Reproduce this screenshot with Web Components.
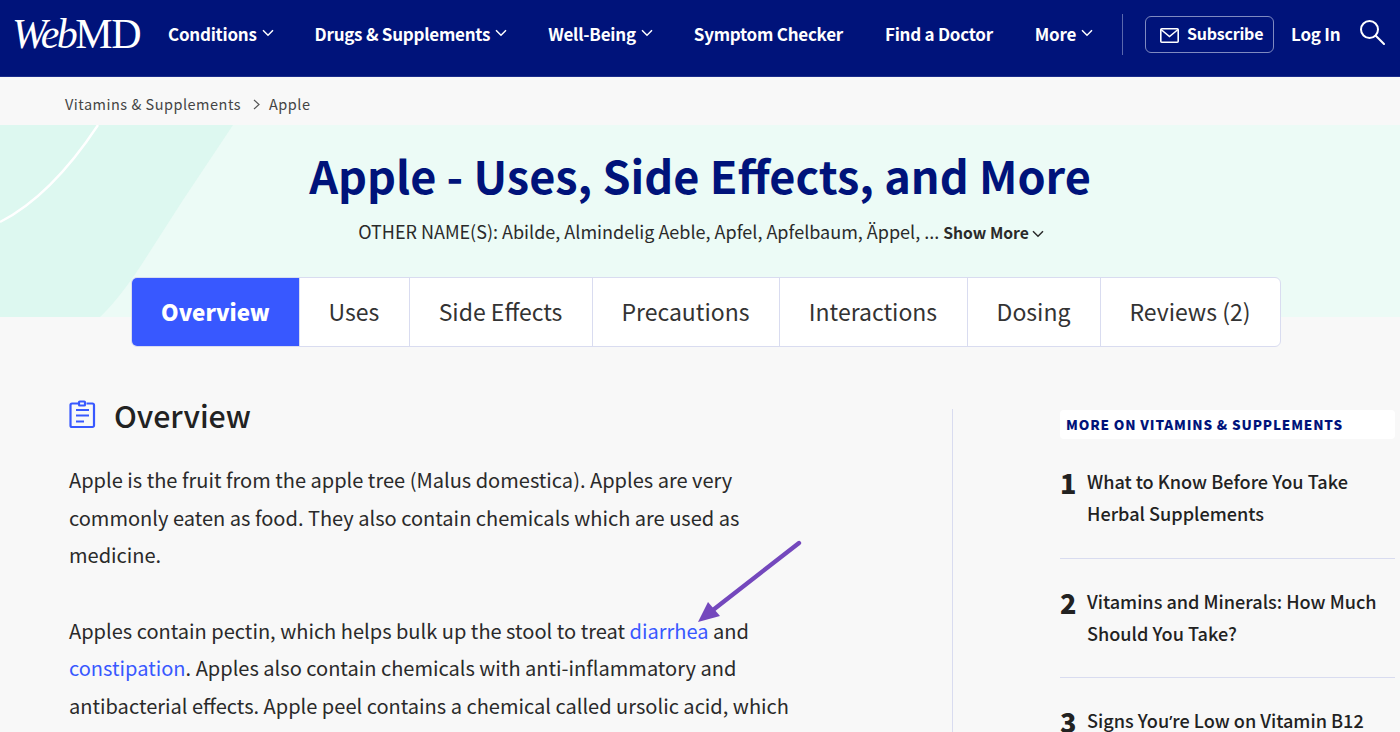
<!DOCTYPE html>
<html lang="en"><head><meta charset="utf-8"><title>Apple - Uses, Side Effects, and More</title>
<style>
html,body{margin:0;padding:0;height:732px;overflow:hidden;background:#f8f8f8;font-family:"Noto Sans CJK SC","Source Sans Pro","Noto Sans",sans-serif;color:#222}
</style></head><body>
<site-header></site-header>
<bread-crumbs></bread-crumbs>
<page-hero></page-hero>
<page-main>
  <article-body></article-body>
  <side-list slot="side"></side-list>
</page-main>
<script>
const def=(name,html)=>customElements.define(name,class extends HTMLElement{connectedCallback(){if(!this.shadowRoot){this.attachShadow({mode:'open'}).innerHTML=html}}});
const chev='<svg width="12" height="8" viewBox="0 0 12 8" fill="none" stroke="currentColor" stroke-width="1.5"><path d="M1 1.2 6 6.2 11 1.2"/></svg>';
def('site-header',`<style>
:host{display:flex;align-items:center;height:77px;background:#00137a;color:#fff;font-weight:600;font-size:17px;letter-spacing:-.25px;box-sizing:border-box;padding:0 0 10px 12px;border-bottom:1px solid #1a2c8a}
.logo{font-family:"Liberation Serif",serif;font-weight:400;font-size:42px;letter-spacing:-1.5px;width:128px;flex:none;line-height:1;white-space:nowrap;margin-top:2px}
.logo i{letter-spacing:-2.5px}
a{display:flex;align-items:center;gap:5px;white-space:nowrap}
.c{margin-left:28px}.n{margin-left:41px}.m{margin-left:42px}
.sep{width:1px;height:41px;background:#5a68ad;margin:2px 0 0 29px}
.sub{margin:2px 0 0 22px;width:129px;height:37px;box-sizing:border-box;border:1px solid #7f8ac0;border-radius:6px;justify-content:center;gap:8px;flex:none;font-size:16px;letter-spacing:-.2px;padding:0 0 2px 4px}
.sub svg{margin-top:5px}
.log{margin-left:17px}.s{margin-left:19px;margin-top:-2px;display:flex}
</style>
<div class="logo"><i>Web</i>MD</div>
<a class="c">Conditions ${chev}</a>
<a class="n">Drugs &amp; Supplements ${chev}</a>
<a class="n">Well-Being ${chev}</a>
<a class="n">Symptom Checker</a>
<a class="m">Find a Doctor</a>
<a class="m">More ${chev}</a>
<span class="sep"></span>
<a class="sub"><svg width="19" height="15" viewBox="0 0 19 15" fill="none" stroke="#fff" stroke-width="1.6"><rect x=".8" y=".8" width="17.4" height="13.4" rx="1"/><path d="M1 1.5 9.5 8.5 18 1.5"/></svg>Subscribe</a>
<a class="log">Log In</a>
<span class="s"><svg width="26" height="26" viewBox="0 0 26 26" fill="none" stroke="#fff" stroke-width="2"><circle cx="10.5" cy="10.5" r="8.5"/><path d="M16.8 16.8 25 25" stroke-linecap="round"/></svg></span>`);
def('bread-crumbs',`<style>
:host{display:flex;align-items:center;height:48px;padding:5px 0 0 65px;font-size:14.5px;letter-spacing:.5px;color:#444;background:#f8f8f8;box-sizing:border-box}
svg{margin:2px 9px 0 12px}
</style>Vitamins &amp; Supplements<svg width="7" height="11" viewBox="0 0 7 11" fill="none" stroke="#555" stroke-width="1.2"><path d="M1 1l5 4.5L1 10"/></svg>Apple`);
def('page-hero',`<style>
:host{display:block;position:relative;height:222px;text-align:center}
.bg{position:absolute;left:0;top:0;width:100%;height:192px}
.in{position:relative;display:flex;flex-direction:column;align-items:center}
h1{margin:18px 0 0;height:64px;line-height:64px;font-size:45.05px;font-weight:700;color:#00137a}
p{margin:9px 0 0 2px;height:30px;line-height:30px;font-size:18px;color:#2a2a2a;display:flex;align-items:center;gap:4px}
b{font-weight:600;font-size:15.7px;display:inline-flex;align-items:center;gap:3px;margin-top:3px}
b svg{margin-top:2px}
</style>
<svg class="bg" viewBox="0 0 1400 192" preserveAspectRatio="none"><rect width="1400" height="192" fill="#ecfbf6"/><path d="M0 0H233L183 75 140 142Q118 175 100 192H0Z" fill="#ddf8f0"/><path d="M98 0Q51 71 0 97" fill="none" stroke="#fff" stroke-width="2.4"/></svg>
<div class="in"><h1>Apple - Uses, Side Effects, and More</h1>
<p>OTHER NAME(S): Abilde, Almindelig Aeble, Apfel, Apfelbaum, Äppel, ... <b>Show More ${chev}</b></p>
<tab-bar></tab-bar></div>`);
def('tab-bar',`<style>
:host{display:flex;margin:31px 0 0 11px;height:70px;width:1150px;box-sizing:border-box;background:#fff;border:1px solid #d9dcf0;border-radius:6px;font-size:23px;color:#333;overflow:hidden}
span{display:flex;align-items:center;justify-content:center;border-left:1px solid #d9dcf0;box-sizing:border-box;padding-bottom:2px}
.a{background:#3858ff;color:#fff;font-weight:900;font-size:22.4px;border-left:0;margin:-1px 0 -1px -1px;padding-left:2px}
</style>
<span class="a" style="width:168px">Overview</span><span style="width:110px">Uses</span><span style="width:183px">Side Effects</span><span style="width:187px">Precautions</span><span style="width:188px">Interactions</span><span style="width:133px">Dosing</span><span style="flex:1">Reviews (2)</span>`);
def('page-main',`<style>
:host{display:flex;padding-left:69px;margin-top:62px}
.l{width:884px;height:323px;border-right:1px solid #d9dcf0;box-sizing:border-box}
.r{margin-left:107px;width:335px;padding-top:1px}
</style><div class="l"><slot></slot></div><div class="r"><slot name="side"></slot></div>`);
def('article-body',`<style>
:host{display:block;font-size:20.05px;line-height:37.5px;color:#2a2a2a;position:relative;width:760px;margin-top:-10px}
h2{margin:0;display:flex;align-items:center;gap:18px;height:34px;font-size:30.3px;font-weight:500;color:#222}
h2 svg{flex:none;margin:-4px 0 0 0}
p{margin:0}
.p1{margin-top:28px}.p2{margin-top:38px}
a{color:#3858ff}
.arrow{position:absolute;left:628px;top:142px}
</style>
<h2><svg width="27" height="29" viewBox="0 0 27 29" fill="none" stroke="#3858ff" stroke-width="2.2"><path d="M9 3.5H3a1.5 1.5 0 0 0-1.5 1.5v20.5A1.5 1.5 0 0 0 3 27h20.5a1.5 1.5 0 0 0 1.5-1.5V5a1.5 1.5 0 0 0-1.5-1.5h-6"/><rect x="10" y="1.5" width="6" height="4" rx=".8"/><path d="M7 10h13M7 15.500h13M7 21.500h8"/></svg>Overview</h2>
<p class="p1">Apple is the fruit from the apple tree (Malus domestica). Apples are very<br>commonly eaten as food. They also contain chemicals which are used as<br>medicine.</p>
<p class="p2">Apples contain pectin, which helps bulk up the stool to treat <a>diarrhea</a> and<br><a>constipation</a>. Apples also contain chemicals with anti-inflammatory and<br>antibacterial effects. Apple peel contains a chemical called ursolic acid, which</p>
<svg class="arrow" width="180" height="100" viewBox="0 0 180 100" style="overflow:visible"><path d="M102 2 16 69" stroke="#7448bd" stroke-width="4.4" stroke-linecap="round" fill="none"/><path d="M1 81 11 61 23 75Z" fill="#7448bd"/></svg>`);
def('side-list',`<style>
:host{display:block;color:#222}
h3{margin:0;height:29px;line-height:29px;background:#fff;border-radius:4px;padding-left:6px;font-size:13.5px;font-weight:900;letter-spacing:.84px;color:#00137a;white-space:nowrap}
.i{display:flex;height:119.5px;box-sizing:border-box;border-bottom:1px solid #d9dcf0;padding-top:26px;font-size:18.1px;font-weight:500;line-height:32px}
.i:last-child{border:0;height:auto}
b{font-size:27px;font-weight:900;width:27px;flex:none;line-height:34px;margin-top:1px}
q{quotes:none;font-family:"Noto Sans",sans-serif;font-size:17px}
</style>
<h3>MORE ON VITAMINS &amp; SUPPLEMENTS</h3>
<div class="i"><b>1</b><span>What to Know Before You Take<br>Herbal Supplements</span></div>
<div class="i"><b>2</b><span>Vitamins and Minerals: How Much<br>Should You Take?</span></div>
<div class="i"><b>3</b><span>Signs You<q>’</q>re Low on Vitamin B12</span></div>`);
</script>
</body></html>
